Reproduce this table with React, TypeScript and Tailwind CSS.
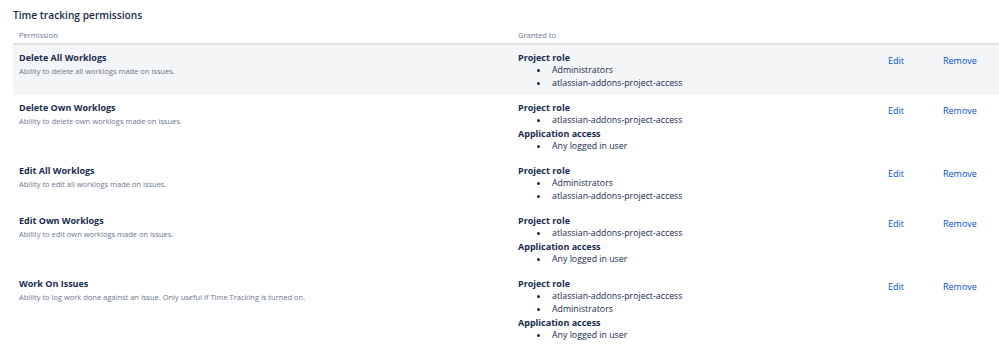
import React from "react";

type Group = { label: string; items: string[] };
type Row = { title: string; desc: string; groups: Group[]; shaded?: boolean };

const rows: Row[] = [
  {
    title: "Delete All Worklogs",
    desc: "Ability to delete all worklogs made on issues.",
    groups: [{ label: "Project role", items: ["Administrators", "atlassian-addons-project-access"] }],
    shaded: true,
  },
  {
    title: "Delete Own Worklogs",
    desc: "Ability to delete own worklogs made on issues.",
    groups: [
      { label: "Project role", items: ["atlassian-addons-project-access"] },
      { label: "Application access", items: ["Any logged in user"] },
    ],
  },
  {
    title: "Edit All Worklogs",
    desc: "Ability to edit all worklogs made on issues.",
    groups: [{ label: "Project role", items: ["Administrators", "atlassian-addons-project-access"] }],
  },
  {
    title: "Edit Own Worklogs",
    desc: "Ability to edit own worklogs made on issues.",
    groups: [
      { label: "Project role", items: ["atlassian-addons-project-access"] },
      { label: "Application access", items: ["Any logged in user"] },
    ],
  },
  {
    title: "Work On Issues",
    desc: "Ability to log work done against an issue. Only useful if Time Tracking is turned on.",
    groups: [
      { label: "Project role", items: ["atlassian-addons-project-access", "Administrators"] },
      { label: "Application access", items: ["Any logged in user"] },
    ],
  },
];

export default function App() {
  return (
    <div
      className="w-[999px] h-[355px] overflow-hidden bg-white text-[#172b4d]"
      style={{ fontFamily: '"Open Sans", "Noto Sans", sans-serif' }}
    >
      <div className="pl-[13px] pt-[7px]">
        <h2 className="text-[10.2px] leading-[16px] font-semibold text-[#172b4d]">Time tracking permissions</h2>
        <div className="mt-[6px] flex border-b-2 border-[#dfe1e6] text-[7.5px] leading-[12px] text-[#6b778c] pb-[2px]">
          <div className="w-[499px] pl-[6px]">Permission</div>
          <div className="pl-[6px]">Granted to</div>
        </div>
        {rows.map((r) => (
          <div key={r.title} className={`flex ${r.shaded ? "bg-[#f4f5f7]" : "bg-white"}`}>
            <div className="w-[499px] pl-[6px] pt-[6px]">
              <div className="text-[9px] leading-[13px] font-bold text-[#172b4d]">{r.title}</div>
              <div className="text-[7.5px] leading-[14px] text-[#6b778c]">{r.desc}</div>
            </div>
            <div className="w-[370px] pl-[6px] pt-[6px] pb-[5px]">
              {r.groups.map((g) => (
                <div key={g.label}>
                  <div className="text-[9px] leading-[13px] font-bold text-[#172b4d]">{g.label}</div>
                  {g.items.map((it) => (
                    <div key={it} className="flex items-center text-[8.8px] leading-[13px] text-[#172b4d]">
                      <span className="ml-[19px] mr-[12px] w-[3px] h-[3px] rounded-full bg-[#172b4d]" />
                      <span>{it}</span>
                    </div>
                  ))}
                </div>
              ))}
            </div>
            <div className="w-[55px] pl-[6px] pt-[9px] text-[9px] leading-[13px] text-[#0052cc]">Edit</div>
            <div className="pl-[6px] pt-[9px] text-[9px] leading-[13px] text-[#0052cc]">Remove</div>
          </div>
        ))}
      </div>
    </div>
  );
}
